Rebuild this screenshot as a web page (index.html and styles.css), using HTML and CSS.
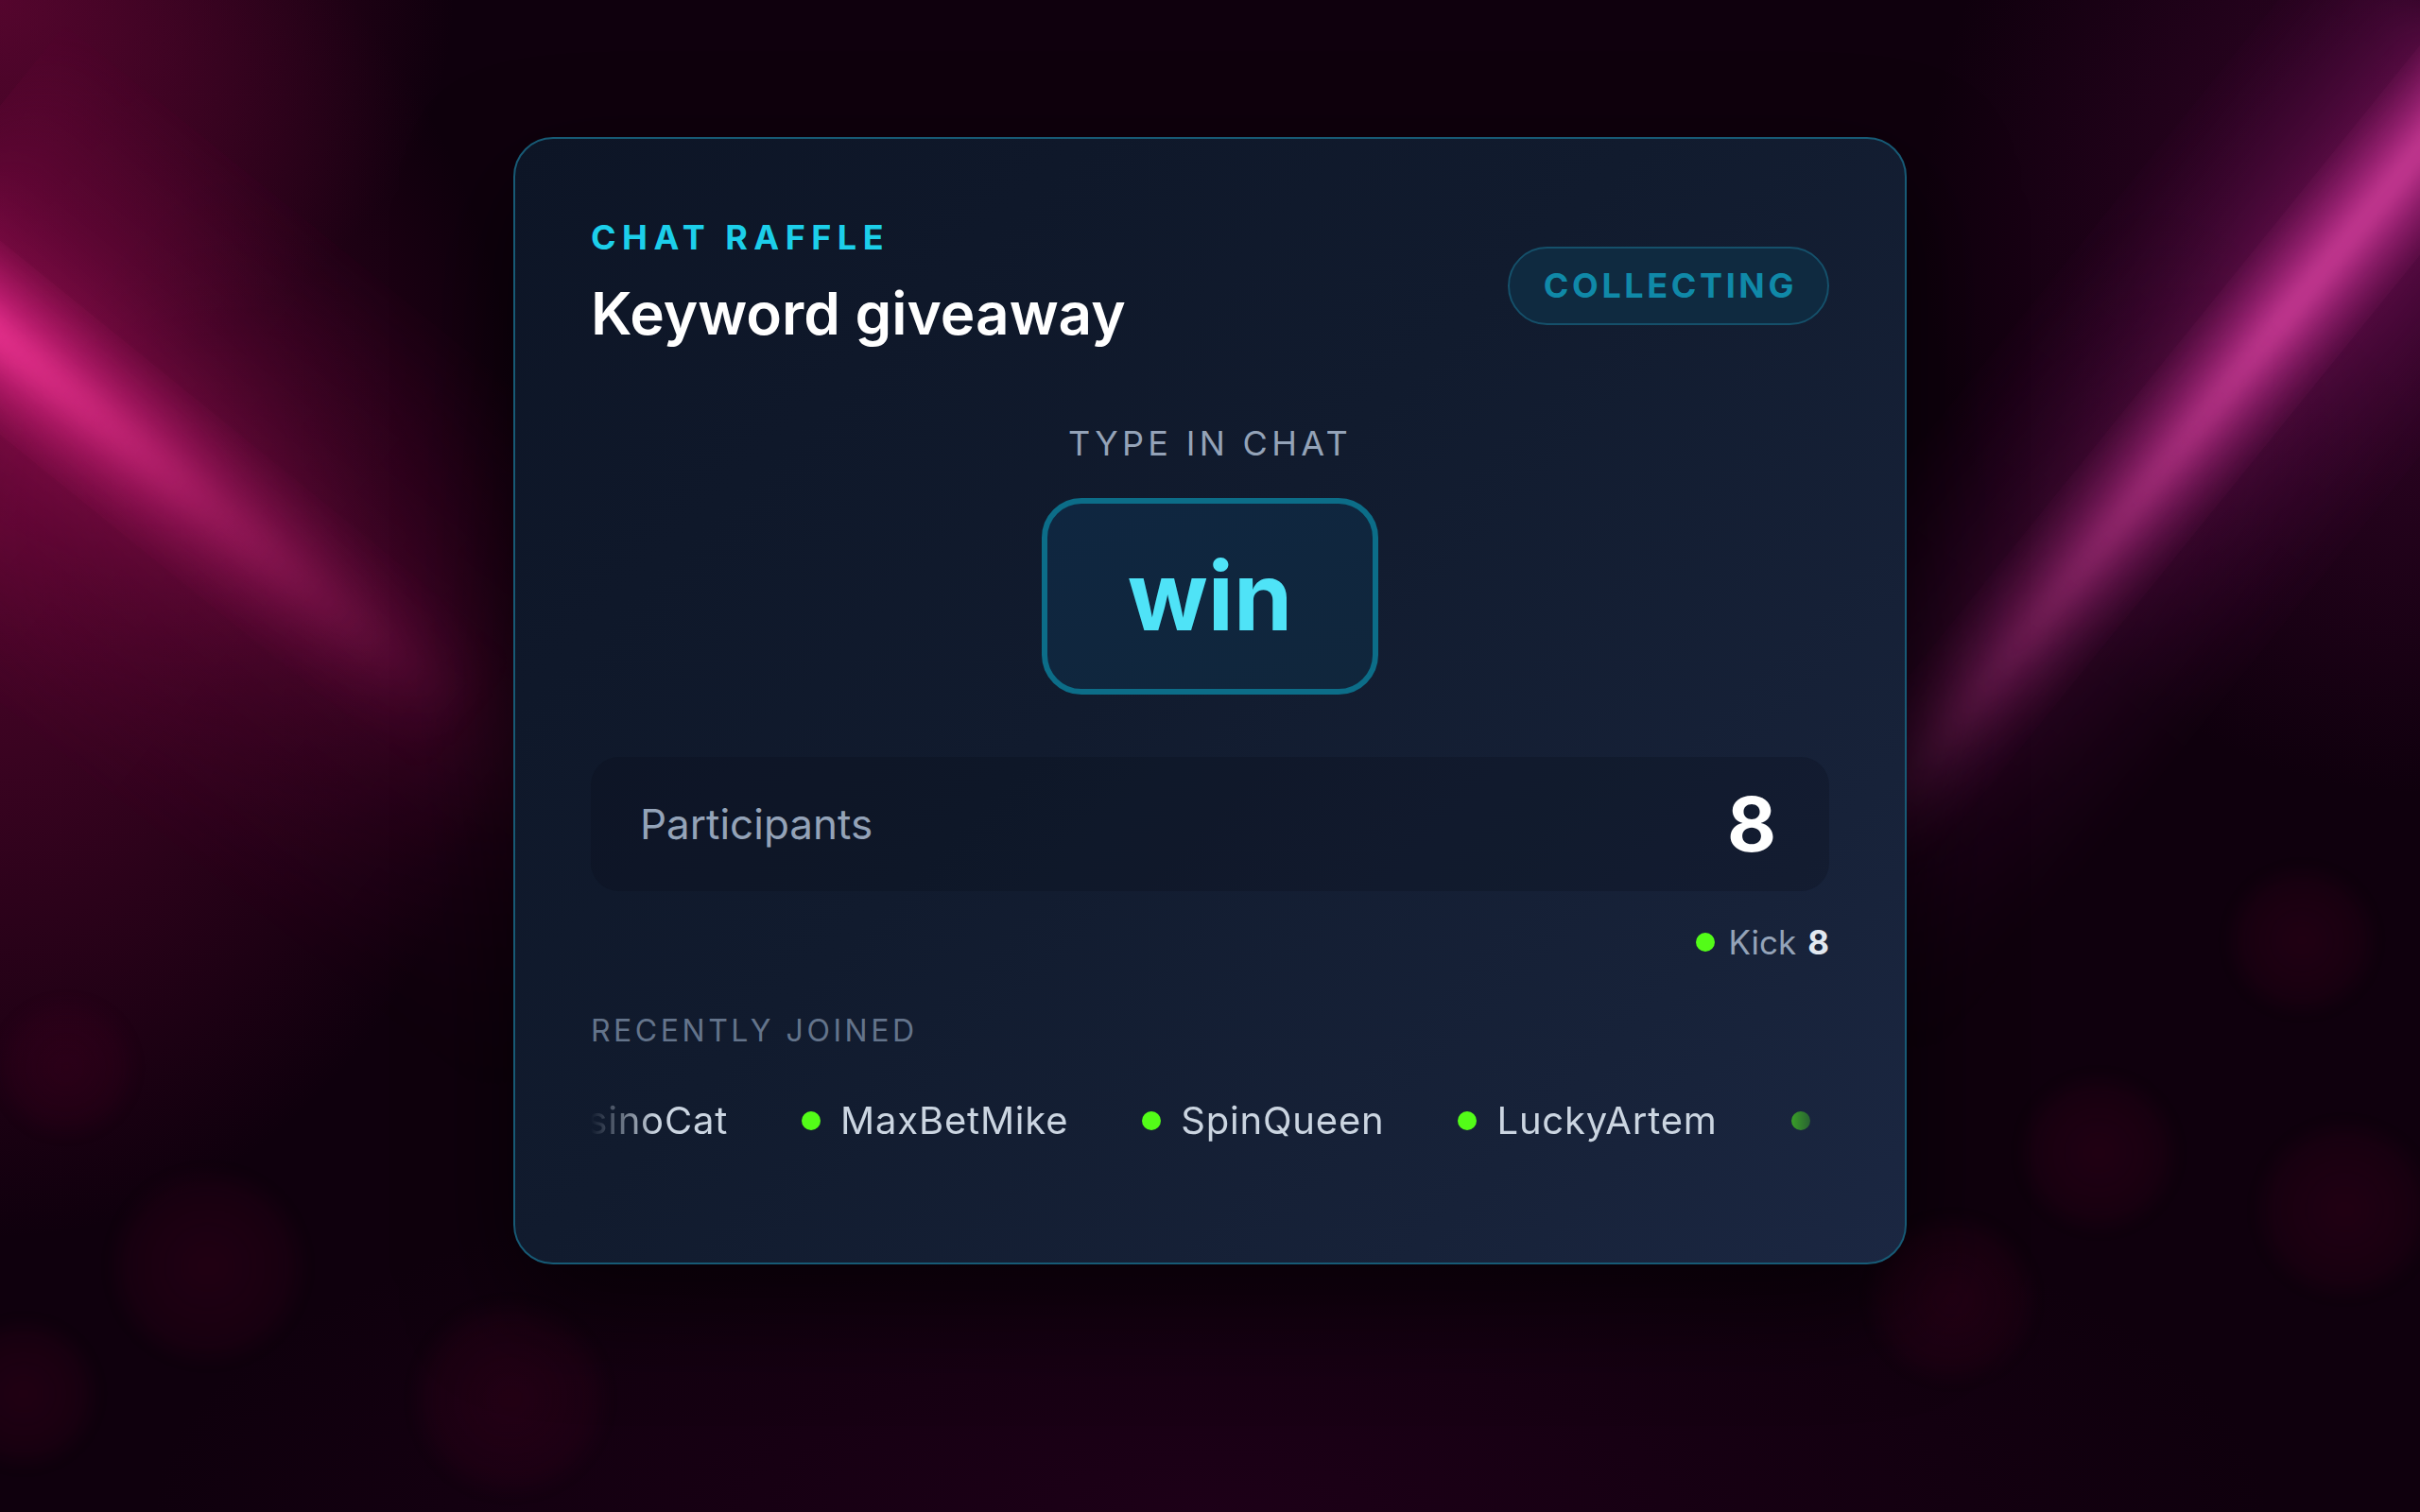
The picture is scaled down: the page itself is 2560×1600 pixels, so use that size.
FILE: index.html
```html
<!DOCTYPE html>
<html lang="en">

<head>
    <meta charset="UTF-8">
    <meta name="viewport" content="width=device-width, initial-scale=1.0">
    <title>Chat raffle</title>

    <link rel="stylesheet" href="styles.css">
</head>

<body>
    <!-- background lights -->
    <div class="backdrop">
        <div class="beam beam-left-glow"></div>
        <div class="beam beam-left"></div>
        <div class="beam beam-right-glow"></div>
        <div class="beam beam-right"></div>
        <span class="bokeh b1"></span>
        <span class="bokeh b2"></span>
        <span class="bokeh b3"></span>
        <span class="bokeh b4"></span>
        <span class="bokeh b5"></span>
        <span class="bokeh b6"></span>
        <span class="bokeh b7"></span>
        <span class="bokeh b8"></span>
    </div>

    <main class="stage">
        <section class="raffle-card">
            <header class="card-head">
                <div class="head-text">
                    <p class="eyebrow">CHAT RAFFLE</p>
                    <h1 class="title">Keyword giveaway</h1>
                </div>
                <span class="status-pill">COLLECTING</span>
            </header>

            <div class="keyword-block">
                <p class="keyword-label">TYPE IN CHAT</p>
                <div class="keyword-box">win</div>
            </div>

            <div class="count-panel">
                <span class="count-label">Participants</span>
                <span class="count-value">8</span>
            </div>

            <div class="platform-row">
                <span class="dot"></span>
                <span class="platform-name">Kick</span>
                <b class="platform-count">8</b>
            </div>

            <p class="section-label">RECENTLY JOINED</p>

            <!-- recently joined ticker -->
            <div class="ticker">
                <div class="ticker-track">
                    <span class="entrant"><i class="dot"></i>CasinoCat</span>
                    <span class="entrant"><i class="dot"></i>MaxBetMike</span>
                    <span class="entrant"><i class="dot"></i>SpinQueen</span>
                    <span class="entrant"><i class="dot"></i>LuckyArtem</span>
                    <span class="entrant"><i class="dot"></i></span>
                </div>
            </div>
        </section>
    </main>
</body>

</html>
```

FILE: styles.css
```css
html,
body {
    margin: 0;
    height: 100%;
}

body {
    position: relative;
    overflow: hidden;
    font-family: "Inter", "Noto Sans", sans-serif;
    background-color: #0f000d;
    background-image:
        radial-gradient(ellipse 600px 500px at 0% 0%, rgba(120, 8, 62, 0.6), transparent 80%),
        radial-gradient(ellipse 750px 1000px at 0% 35%, rgba(130, 8, 66, 0.55), transparent 75%),
        radial-gradient(ellipse 700px 800px at 100% 15%, rgba(105, 10, 78, 0.45), transparent 75%),
        radial-gradient(ellipse 1400px 500px at 50% 100%, rgba(35, 0, 28, 0.7), transparent 80%);
}

/* background lights */
.backdrop {
    position: absolute;
    inset: 0;
    pointer-events: none;
}

.beam {
    position: absolute;
    transform-origin: 0 50%;
}

.beam-left-glow {
    left: -120px;
    top: -40px;
    width: 1300px;
    height: 600px;
    transform: rotate(39deg);
    background: linear-gradient(to bottom, transparent 0%, rgba(150, 10, 80, 0.35) 30%, rgba(210, 25, 115, 0.6) 50%, rgba(150, 10, 80, 0.35) 70%, transparent 100%);
    -webkit-mask-image: linear-gradient(to right, #000 0%, #000 15%, rgba(0, 0, 0, 0.45) 45%, transparent 85%);
    mask-image: linear-gradient(to right, #000 0%, #000 15%, rgba(0, 0, 0, 0.45) 45%, transparent 85%);
    filter: blur(40px);
}

.beam-left {
    left: -120px;
    top: 180px;
    width: 1000px;
    height: 160px;
    transform: rotate(39deg);
    background: linear-gradient(to bottom, transparent 0%, rgba(230, 40, 140, 0.6) 35%, #ff3d9e 50%, rgba(230, 40, 140, 0.6) 65%, transparent 100%);
    -webkit-mask-image: linear-gradient(to right, #000 0%, #000 14%, rgba(0, 0, 0, 0.4) 45%, transparent 80%);
    mask-image: linear-gradient(to right, #000 0%, #000 14%, rgba(0, 0, 0, 0.4) 45%, transparent 80%);
    filter: blur(16px);
}

.beam-right-glow {
    left: 2640px;
    top: -160px;
    width: 1300px;
    height: 420px;
    transform: rotate(129deg);
    background: linear-gradient(to bottom, transparent 0%, rgba(120, 15, 95, 0.35) 30%, rgba(180, 35, 130, 0.55) 50%, rgba(120, 15, 95, 0.35) 70%, transparent 100%);
    -webkit-mask-image: linear-gradient(to right, #000 0%, #000 25%, rgba(0, 0, 0, 0.5) 60%, transparent 95%);
    mask-image: linear-gradient(to right, #000 0%, #000 25%, rgba(0, 0, 0, 0.5) 60%, transparent 95%);
    filter: blur(30px);
}

.beam-right {
    left: 2640px;
    top: -10px;
    width: 1200px;
    height: 140px;
    transform: rotate(129deg);
    background: linear-gradient(to bottom, transparent 0%, rgba(200, 50, 150, 0.55) 35%, #d9449f 50%, rgba(200, 50, 150, 0.55) 65%, transparent 100%);
    -webkit-mask-image: linear-gradient(to right, #000 0%, #000 30%, rgba(0, 0, 0, 0.5) 60%, transparent 90%);
    mask-image: linear-gradient(to right, #000 0%, #000 30%, rgba(0, 0, 0, 0.5) 60%, transparent 90%);
    filter: blur(14px);
}

.bokeh {
    position: absolute;
    border-radius: 50%;
    background: radial-gradient(circle, rgba(80, 0, 36, 0.28) 0%, rgba(80, 0, 36, 0.14) 60%, transparent 75%);
    filter: blur(8px);
}

.b1 { left: 120px; top: 1240px; width: 200px; height: 200px; }
.b2 { left: -50px; top: 1400px; width: 150px; height: 150px; }
.b3 { left: 440px; top: 1380px; width: 200px; height: 200px; }
.b4 { left: 0px; top: 1060px; width: 140px; height: 140px; }
.b5 { left: 2360px; top: 920px; width: 150px; height: 150px; }
.b6 { left: 2390px; top: 1190px; width: 180px; height: 180px; }
.b7 { left: 2140px; top: 1140px; width: 160px; height: 160px; }
.b8 { left: 1980px; top: 1290px; width: 170px; height: 170px; }

/* card */
.stage {
    position: relative;
    display: flex;
    justify-content: center;
    padding-top: 145px;
}

.raffle-card {
    box-sizing: border-box;
    width: 1474px;
    padding: 80px;
    border: 2px solid #175a75;
    border-radius: 42px;
    background: linear-gradient(135deg, #0d1526 0%, #111b2e 45%, #172239 80%, #1b2742 100%);
    box-shadow: 0 40px 110px rgba(0, 0, 0, 0.6);
}

.card-head {
    display: flex;
    justify-content: space-between;
    align-items: flex-start;
}

.head-text {
    padding-top: 3px;
}

.eyebrow {
    margin: 0;
    font-size: 36px;
    line-height: 1.2;
    font-weight: 700;
    letter-spacing: 0.18em;
    color: #1ccfea;
}

.title {
    margin: 22px 0 0;
    font-size: 62px;
    line-height: 1.2;
    font-weight: 600;
    color: #ffffff;
}

.status-pill {
    margin-top: 34px;
    padding: 18px 32px 18px 36px;
    border: 2px solid #15506a;
    border-radius: 999px;
    background-color: #0f2a40;
    color: #1089a8;
    font-size: 36px;
    line-height: 1.2;
    font-weight: 700;
    letter-spacing: 0.1em;
}

.keyword-block {
    display: flex;
    flex-direction: column;
    align-items: center;
    margin-top: 78px;
}

.keyword-label {
    margin: 0;
    font-size: 36px;
    line-height: 1.2;
    letter-spacing: 0.12em;
    color: #94a3b8;
}

.keyword-box {
    margin-top: 36px;
    padding: 38px 85px;
    border: 6px solid #0c6d88;
    border-radius: 42px;
    background: linear-gradient(160deg, #0f2640, #10263c);
    color: #4fe3f7;
    font-size: 100px;
    line-height: 1.2;
    font-weight: 700;
}

.count-panel {
    display: flex;
    justify-content: space-between;
    align-items: center;
    margin-top: 66px;
    padding: 31px 56px 31px 52px;
    border-radius: 30px;
    background-color: rgba(8, 12, 24, 0.25);
}

.count-label {
    font-size: 44px;
    color: #94a3b8;
}

.count-value {
    font-size: 80px;
    line-height: 1;
    font-weight: 700;
    color: #ffffff;
}

.platform-row {
    display: flex;
    justify-content: flex-end;
    align-items: center;
    margin-top: 33px;
    font-size: 35px;
    line-height: 1.2;
    color: #94a3b8;
}

.platform-row .dot {
    margin-right: 14px;
}

.platform-count {
    margin-left: 12px;
    color: #e2e8f0;
}

.dot {
    display: inline-block;
    width: 20px;
    height: 20px;
    border-radius: 50%;
    background-color: #53fc18;
}

.section-label {
    margin: 54px 0 0;
    font-size: 32px;
    line-height: 1.2;
    letter-spacing: 0.11em;
    color: #64748b;
}

.ticker {
    margin: 52px 0 46px;
    overflow: hidden;
    -webkit-mask-image: linear-gradient(90deg, transparent 0, #000 70px, #000 calc(100% - 70px), transparent 100%);
    mask-image: linear-gradient(90deg, transparent 0, #000 70px, #000 calc(100% - 70px), transparent 100%);
}

.ticker-track {
    display: flex;
    gap: 78px;
    transform: translateX(-98px);
}

.entrant {
    display: flex;
    align-items: center;
    gap: 21px;
    flex-shrink: 0;
    font-size: 40px;
    line-height: 1.2;
    letter-spacing: 0.02em;
    color: #cbd5e1;
}
```
